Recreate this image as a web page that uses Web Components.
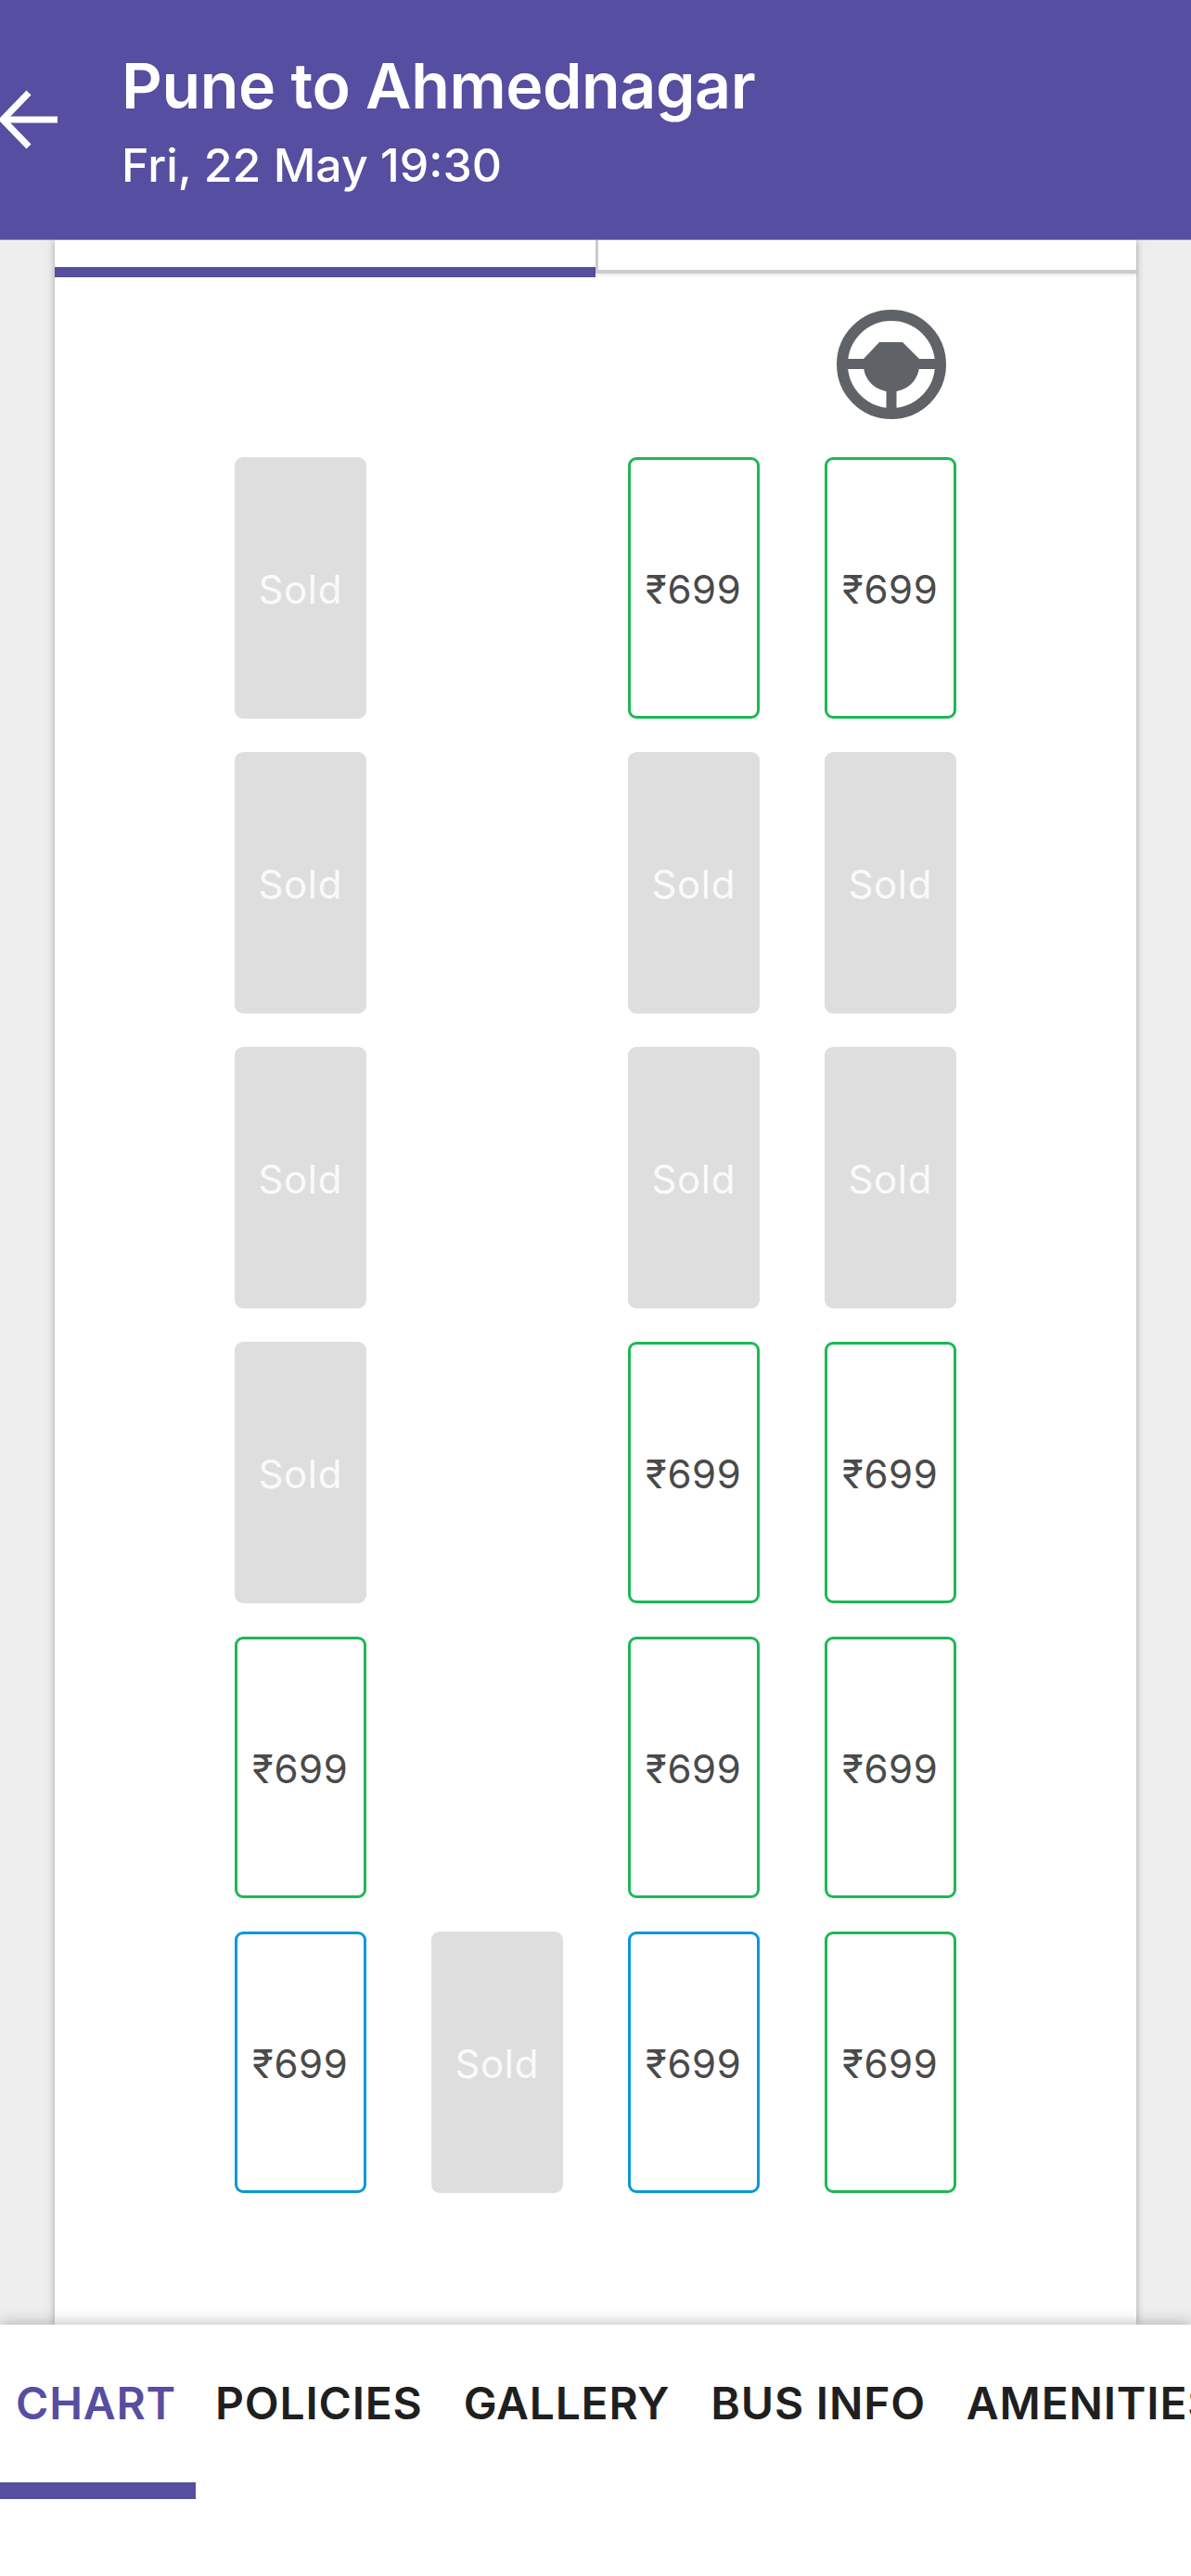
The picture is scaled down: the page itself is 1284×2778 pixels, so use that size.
<!DOCTYPE html>
<html>
<head>
<meta charset="utf-8">
<title>Pune to Ahmednagar</title>
<style>
    html, body { margin: 0; padding: 0; background: #eeeeee; }
    body { font-family: Inter, "Noto Sans", sans-serif; }
    bus-app { height: 2778px; }
</style>
</head>
<body>
<bus-app>
    <trip-header slot="header" route="Pune to Ahmednagar" when="Fri, 22 May 19:30"></trip-header>
    <deck-tabs></deck-tabs>
    <seat-map>
        <steering-wheel></steering-wheel>
    </seat-map>
    <bottom-tabs slot="footer"></bottom-tabs>
</bus-app>

<script>
class BusApp extends HTMLElement {
    constructor() {
        super();
        this._root = this.attachShadow({ mode: "open" });
    }
    connectedCallback() {
        this._root.innerHTML = `
            <style>
                :host {
                    display: flex;
                    flex-direction: column;
                    overflow: hidden;
                    background: #eeeeee;
                }
                .main {
                    flex: 1;
                    min-height: 0;
                    overflow: hidden;
                    padding: 0 59px;
                }
                .card {
                    height: 100%;
                    background: #ffffff;
                    box-shadow: 0 0 8px rgba(0, 0, 0, 0.32);
                }
            </style>
            <slot name="header"></slot>
            <div class="main"><div class="card"><slot></slot></div></div>
            <slot name="footer"></slot>
        `;
    }
}
customElements.define("bus-app", BusApp);

class TripHeader extends HTMLElement {
    constructor() {
        super();
        this._root = this.attachShadow({ mode: "open" });
    }
    connectedCallback() {
        this._root.innerHTML = `
            <style>
                :host {
                    display: flex;
                    flex: none;
                    align-items: flex-start;
                    height: 258px;
                    border-bottom: 1px solid #8d88c0;
                    background: #564ea0;
                    color: #ffffff;
                    position: relative;
                    z-index: 2;
                }
                svg { display: block; width: 64px; height: 64px; margin-top: 97px; flex: none; }
                .text { margin-left: 67px; padding-top: 54px; }
                .route { font-size: 68px; line-height: 76px; font-weight: 600; letter-spacing: -0.4px; }
                .when { font-size: 50px; line-height: 56px; font-weight: 500; margin-top: 20px; }
            </style>
            <svg viewBox="0 0 64 64" fill="none" stroke="#fff" stroke-width="7">
                <path d="M62 32H3"/>
                <path d="M31 3L3 32L31 61"/>
            </svg>
            <div class="text">
                <div class="route">${this.getAttribute("route")}</div>
                <div class="when">${this.getAttribute("when")}</div>
            </div>
        `;
    }
}
customElements.define("trip-header", TripHeader);

class DeckTabs extends HTMLElement {
    constructor() {
        super();
        this._root = this.attachShadow({ mode: "open" });
    }
    connectedCallback() {
        this._root.innerHTML = `
            <style>
                :host {
                    display: flex;
                    height: 40px;
                }
                .on {
                    width: 583px;
                    box-sizing: border-box;
                    border-bottom: 11px solid #564ea0;
                }
                .off {
                    flex: 1;
                    height: 36px;
                    box-sizing: border-box;
                    border-left: 3px solid #cccccc;
                    border-bottom: 4px solid #cccccc;
                    box-shadow: 0 2px 3px rgba(0, 0, 0, 0.08);
                }
            </style>
            <div class="on"></div>
            <div class="off"></div>
        `;
    }
}
customElements.define("deck-tabs", DeckTabs);

class SteeringWheel extends HTMLElement {
    constructor() {
        super();
        this._root = this.attachShadow({ mode: "open" });
    }
    connectedCallback() {
        this._root.innerHTML = `
            <style>
                :host { display: block; width: 118px; height: 118px; }
                svg { display: block; width: 100%; height: 100%; }
            </style>
            <svg viewBox="0 0 118 118" fill="#5f6367">
                <circle cx="59" cy="59" r="53" fill="none" stroke="#5f6367" stroke-width="12"/>
                <rect x="6" y="53" width="106" height="11"/>
                <rect x="53.5" y="80" width="11" height="30"/>
                <path d="M46 35H71L89 53V60A30 28.5 0 0 1 29 60V53Z"/>
            </svg>
        `;
    }
}
customElements.define("steering-wheel", SteeringWheel);

class BusSeat extends HTMLElement {
    constructor() {
        super();
        this._root = this.attachShadow({ mode: "open" });
    }
    connectedCallback() {
        this._root.innerHTML = `
            <style>
                :host {
                    display: flex;
                    align-items: center;
                    justify-content: center;
                    box-sizing: border-box;
                    height: 282px;
                    padding-top: 3px;
                    border-radius: 9px;
                    font-size: 42px;
                    letter-spacing: 0.6px;
                    color: #4a4a4a;
                }
                :host([status="sold"]) { background: #dedede; color: #fafafa; }
                :host([status="free"]) { border: 3px solid #1db954; }
                :host([status="ladies"]) { border: 3px solid #0a99d6; }
                :host([status="empty"]) { visibility: hidden; }
            </style>
            <slot></slot>
        `;
    }
}
customElements.define("bus-seat", BusSeat);

const SEAT_ROWS = [
    "s.ff",
    "s.ss",
    "s.ss",
    "s.ff",
    "f.ff",
    "bsbf"
];

class SeatMap extends HTMLElement {
    constructor() {
        super();
        this._root = this.attachShadow({ mode: "open" });
    }
    connectedCallback() {
        this._root.innerHTML = `
            <style>
                :host {
                    display: block;
                    padding: 35px 193px 0 194px;
                }
                .driver {
                    display: flex;
                    justify-content: flex-end;
                    padding-right: 12px;
                    margin-bottom: 41px;
                }
                .grid {
                    display: grid;
                    grid-template-columns: repeat(4, 141.5px);
                    column-gap: 70.5px;
                    row-gap: 36px;
                }
            </style>
            <div class="driver"><slot></slot></div>
            <div class="grid"></div>
        `;
        const grid = this._root.querySelector(".grid");
        const kinds = { s: "sold", f: "free", b: "ladies", ".": "empty" };
        SEAT_ROWS.forEach((row) => {
            row.split("").forEach((code) => {
                const seat = document.createElement("bus-seat");
                seat.setAttribute("status", kinds[code]);
                if (code === "s") seat.textContent = "Sold";
                if (code === "f" || code === "b") seat.textContent = "₹699";
                grid.appendChild(seat);
            });
        });
    }
}
customElements.define("seat-map", SeatMap);

class BottomTabs extends HTMLElement {
    constructor() {
        super();
        this._root = this.attachShadow({ mode: "open" });
    }
    connectedCallback() {
        const names = ["CHART", "POLICIES", "GALLERY", "BUS INFO", "AMENITIES"];
        this._root.innerHTML = `
            <style>
                :host {
                    display: flex;
                    flex: none;
                    height: 271px;
                    background: #ffffff;
                    box-shadow: 0 -3px 14px rgba(0, 0, 0, 0.22);
                    overflow: hidden;
                    position: relative;
                    z-index: 2;
                    font-size: 48px;
                    font-weight: 600;
                    letter-spacing: 0.8px;
                    color: #1f1f1f;
                }
                .tab {
                    flex: none;
                    height: 188px;
                    box-sizing: border-box;
                    padding: 56px 22px 0;
                    line-height: 58px;
                    white-space: nowrap;
                }
                .tab.on {
                    width: 211px;
                    padding-left: 17px;
                    padding-right: 0;
                    margin-right: -1px;
                    color: #564ea0;
                    border-bottom: 18px solid #564ea0;
                }
            </style>
            ${names.map((name, i) => `<div class="tab ${i === 0 ? "on" : ""}">${name}</div>`).join("")}
        `;
    }
}
customElements.define("bottom-tabs", BottomTabs);
</script>
</body>
</html>
